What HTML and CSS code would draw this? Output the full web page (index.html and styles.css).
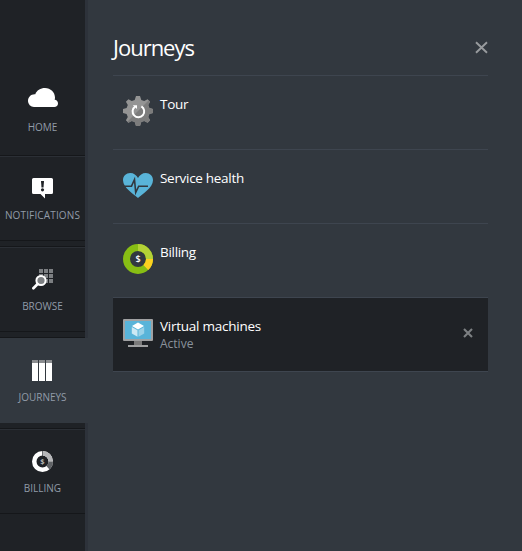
FILE: index.html
```html
<!DOCTYPE html>
<html lang="en">
<head>
<meta charset="utf-8">
<title>Journeys</title>
<link rel="stylesheet" href="styles.css">
</head>
<body>
<nav class="sidebar">
  <a class="nav-item home">
    <svg class="nav-icon cloud" width="30" height="19" viewBox="0 0 30 19"><path fill="#fff" d="M6 19a6 6 0 0 1-6-6.200C0 8.800 3.200 5.800 7.300 6.200 8.600 2.400 12.500 0 17 0c5.600 0 10 4.300 10 9.600 0 .7-.1 1.400-.3 2.200C28.700 11.900 30 13.500 30 15.400 30 17.500 28.400 19 26.300 19z"/></svg>
    <span class="nav-label">Home</span>
  </a>
  <a class="nav-item">
    <svg class="nav-icon" width="22" height="22" viewBox="0 0 22 22"><path fill="#fff" d="M1.500 0h18A1.500 1.500 0 0 1 21 1.500v13a1.500 1.500 0 0 1-1.500 1.500H13v4.500L8.500 16h-7A1.500 1.500 0 0 1 0 14.500v-13A1.500 1.500 0 0 1 1.500 0z"/><path fill="#1f2226" d="M9 3h3l-.5 6.500h-2z"/><circle cx="10.500" cy="11.800" r="1.600" fill="#1f2226"/></svg>
    <span class="nav-label wide">Notifications</span>
  </a>
  <a class="nav-item">
    <svg class="nav-icon" width="22" height="22" viewBox="0 1 22 22"><path fill="#7c7f82" d="M7 1h4v4H7zM12 1h4v4h-4zM17 1h4v4h-4zM7 6h4v4H7zM12 6h4v4h-4zM17 6h4v4h-4zM12 11h4v4h-4zM17 11h4v4h-4z"/><circle cx="9" cy="12.500" r="4.600" fill="#7c7f82" stroke="#fff" stroke-width="2"/><path stroke="#fff" stroke-width="2.700" stroke-linecap="round" d="M5.600 16 1.400 20.200"/></svg>
    <span class="nav-label">Browse</span>
  </a>
  <a class="nav-item active">
    <svg class="nav-icon" width="22" height="22" viewBox="0 1 22 22"><path fill="#8b8d90" d="M0 1h6v3H0zM7 1h6v3H7zM14 1h6v3h-6z"/><path fill="#fff" d="M0 4h6v18H0zM7 4h6v18H7zM14 4h6v18h-6z"/></svg>
    <span class="nav-label">Journeys</span>
  </a>
  <a class="nav-item">
    <svg class="nav-icon" width="22" height="22" viewBox="0 1 22 22"><g fill="none" stroke-width="4.500"><circle cx="10.500" cy="11.500" r="8.250" stroke="#fff"/><path stroke="#b5b6b8" d="M10.500 3.250a8.250 8.250 0 0 1 8.250 8.250"/><path stroke="#5f6265" d="M18.750 11.500a8.250 8.250 0 0 1-2.800 6.200"/></g><path stroke="#1f2226" stroke-width=".6" d="M10.500 1v5"/><text class="coin dim" x="10.500" y="14.200" font-size="7.500">$</text></svg>
    <span class="nav-label">Billing</span>
  </a>
</nav>
<main class="panel">
  <header class="panel-head">
    <h1>Journeys</h1>
    <svg class="close" width="13" height="13" viewBox="0 0 13 13"><path stroke="#989b9e" stroke-width="1.900" d="M1 1.200l11 10.600M12 1.200L1 11.800"/></svg>
  </header>
  <ul class="list">
    <li class="row">
      <svg class="row-icon" width="30" height="30" viewBox="0 0 30 30"><path id="gear" fill="#949494" d="M13 0h4l1.300 3.900 2.900 1.200 3.400-1.900 2.500 2.500-1.900 3.400 1.200 2.900L30 13v4l-3.600 1-1.200 2.900 1.900 3.400-2.500 2.500-3.400-1.900-2.900 1.200L17 30h-4l-1.300-3.900-2.900-1.200-3.400 1.900-2.500-2.500 1.900-3.400L3.600 18 0 17v-4l3.600-1 1.200-2.900-1.900-3.400 2.500-2.500 3.400 1.900 2.900-1.200z"/><clipPath id="lower"><path d="M30 0v30H0z"/></clipPath><use href="#gear" class="shade" clip-path="url(#lower)"/><path fill="none" stroke="#fff" stroke-width="2" d="M18.400 10.400a5.800 5.800 0 1 1-6.300.2"/><path fill="#fff" d="M9.800 9.300l4.200-.1v3.900z"/></svg>
      <div class="text"><span class="name">Tour</span></div>
    </li>
    <li class="row">
      <svg class="row-icon" width="30" height="30" viewBox="0 0 30 30"><path fill="#59b4d9" d="M15 28C11 24.400 0 17.800 0 10.300 0 6 3.200 3 7.200 3c3.500 0 6.200 2 7.800 5 1.600-3 4.300-5 7.800-5C26.800 3 30 6 30 10.300c0 7.500-11 14.100-15 17.700z"/><path fill="none" stroke="#32383f" stroke-width="1.600" d="M1 16.200h7.500l3-6.700 1.200 13 3-6.300H25"/></svg>
      <div class="text"><span class="name">Service health</span></div>
    </li>
    <li class="row">
      <svg class="row-icon" width="30" height="30" viewBox="0 0 30 30"><g fill="none" stroke-width="7"><circle cx="15" cy="15" r="11.500" stroke="#88be14"/><path stroke="#b4d236" d="M15 3.500A11.500 11.500 0 0 1 26.500 15"/><path stroke="#fdd020" d="M26.500 15a11.500 11.500 0 0 1-3.700 8.500"/></g><text class="coin" x="15" y="18.300" font-size="9">$</text></svg>
      <div class="text"><span class="name">Billing</span></div>
    </li>
    <li class="row selected">
      <svg class="row-icon" width="30" height="30" viewBox="0 0 30 30"><path fill="#7a7a7a" d="M11 23h8v4h-8z"/><path fill="#a0a1a2" d="M5 27h20v2H5zM1 1h28a1 1 0 0 1 1 1v20a1 1 0 0 1-1 1H1a1 1 0 0 1-1-1V2a1 1 0 0 1 1-1z"/><path fill="#59b4d9" d="M2 3h26v18H2z"/><path fill="#fff" d="M15 4.500l6 3.500-6 3.400L9 8z"/><path fill="#cde9f4" d="M8.800 8.900l5.700 3.300v6.600l-5.700-3.300z"/><path fill="#9bd2e8" d="M21.200 8.900l-5.700 3.300v6.600l5.700-3.300z"/></svg>
      <div class="text"><span class="name vm">Virtual machines</span><span class="status">Active</span></div>
      <svg class="dismiss" width="10" height="10" viewBox="0 0 10 10"><path stroke="#7d8083" stroke-width="2.100" d="M1 1l8 8M9 1L1 9"/></svg>
    </li>
  </ul>
</main>
</body>
</html>
```
FILE: styles.css
```css
* { box-sizing: border-box; }
body {
  margin: 0;
  height: 551px;
  display: flex;
  overflow: hidden;
  background: #32383f;
  font-family: "Open Sans", "Noto Sans", sans-serif;
}
.sidebar {
  width: 88px;
  display: flex;
  flex-direction: column;
  gap: 6px;
  background: linear-gradient(90deg, #1f2226 85px, #2d323a 85px);
}
.nav-item {
  width: 85px;
  height: 85px;
  flex: none;
  display: flex;
  flex-direction: column;
  align-items: center;
  padding-top: 21px;
  border-top: 1px solid #2b2f35;
  border-bottom: 1px solid #15171a;
  box-shadow: 0 -1px #15171a;
}
.home {
  height: 150px;
  padding-top: 88px;
  border: 0;
  box-shadow: none;
}
.active {
  width: 88px;
  padding-right: 3px;
  background: #32383f;
  border-color: #32383f;
  box-shadow: -3px -1px #15171a;
}
.nav-icon { display: block; flex: none; }
.cloud { margin-bottom: 10px; }
.nav-label {
  margin-top: 8px;
  font-size: 10px;
  font-weight: 500;
  line-height: 14px;
  text-transform: uppercase;
  white-space: nowrap;
  color: #919ba8;
}
.wide { letter-spacing: .15px; }
.home .nav-label { margin-top: 3px; }
.panel {
  width: 375px;
  margin-left: 25px;
}
.panel-head {
  height: 75px;
  display: flex;
  justify-content: space-between;
  padding-top: 32px;
}
h1 {
  margin: 0;
  font-size: 22px;
  font-weight: 400;
  line-height: 30px;
  letter-spacing: -1px;
  color: #fff;
}
.close { margin-top: 9px; }
.list { margin: 0; padding: 0; list-style: none; }
.row {
  height: 74px;
  display: flex;
  padding: 20px 15px 0 10px;
  border-top: 1px solid #3e454f;
}
.selected {
  height: 75px;
  background: #1f2226;
  border-bottom: 1px solid #3e454f;
}
.row-icon { flex: none; display: block; }
.text {
  flex: 1;
  display: flex;
  flex-direction: column;
  padding-left: 7px;
}
.name {
  font-size: 13.500px;
  line-height: 18px;
  margin-top: -1px;
  letter-spacing: -.3px;
  color: #fff;
}
.vm { letter-spacing: -.25px; }
.status {
  margin-top: 1px;
  font-size: 12px;
  line-height: 16px;
  color: #8a929c;
}
.dismiss { margin-top: 10px; }
.shade { filter: brightness(.84); }
.coin { fill: #fff; font-weight: 600; text-anchor: middle; }
.dim { fill: #c8cacc; }
```
